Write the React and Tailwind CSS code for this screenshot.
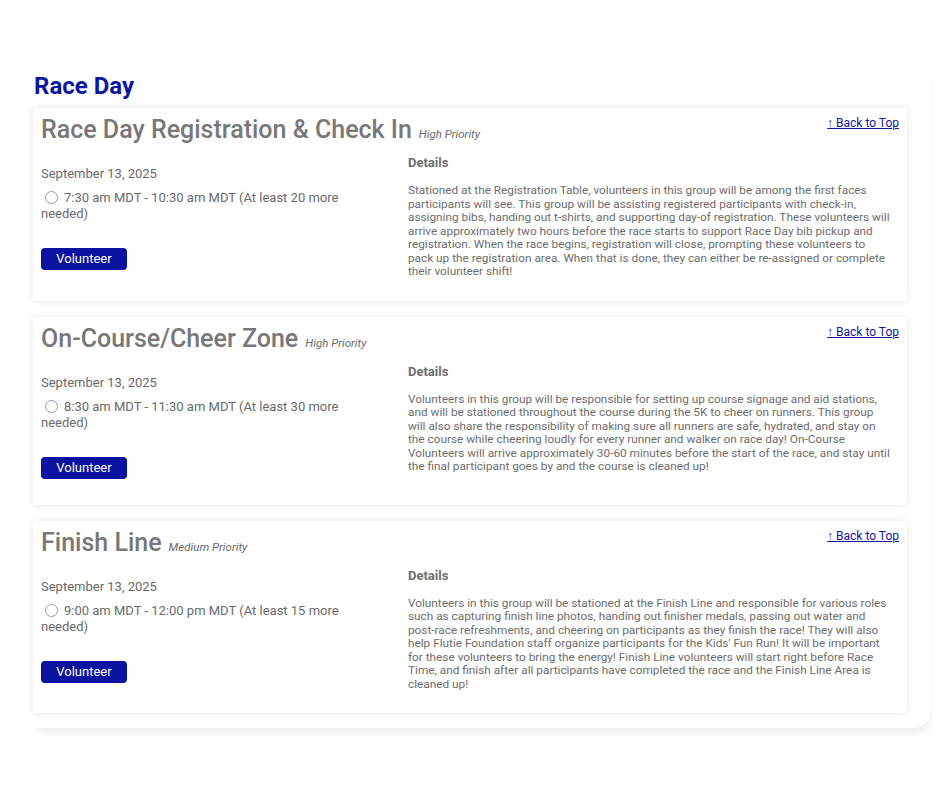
import React from "react";

const shifts = [
    {
        title: "Race Day Registration & Check In",
        priority: "High Priority",
        date: "September 13, 2025",
        time: "7:30 am MDT - 10:30 am MDT (At least 20 more needed)",
        details:
            "Stationed at the Registration Table, volunteers in this group will be among the first faces participants will see. This group will be assisting registered participants with check-in, assigning bibs, handing out t-shirts, and supporting day-of registration. These volunteers will arrive approximately two hours before the race starts to support Race Day bib pickup and registration. When the race begins, registration will close, prompting these volunteers to pack up the registration area. When that is done, they can either be re-assigned or complete their volunteer shift!",
    },
    {
        title: "On-Course/Cheer Zone",
        priority: "High Priority",
        date: "September 13, 2025",
        time: "8:30 am MDT - 11:30 am MDT (At least 30 more needed)",
        details:
            "Volunteers in this group will be responsible for setting up course signage and aid stations, and will be stationed throughout the course during the 5K to cheer on runners. This group will also share the responsibility of making sure all runners are safe, hydrated, and stay on the course while cheering loudly for every runner and walker on race day! On-Course Volunteers will arrive approximately 30-60 minutes before the start of the race, and stay until the final participant goes by and the course is cleaned up!",
    },
    {
        title: "Finish Line",
        priority: "Medium Priority",
        date: "September 13, 2025",
        time: "9:00 am MDT - 12:00 pm MDT (At least 15 more needed)",
        details:
            "Volunteers in this group will be stationed at the Finish Line and responsible for various roles such as capturing finish line photos, handing out finisher medals, passing out water and post-race refreshments, and cheering on participants as they finish the race! They will also help Flutie Foundation staff organize participants for the Kids' Fun Run! It will be important for these volunteers to bring the energy! Finish Line volunteers will start right before Race Time, and finish after all participants have completed the race and the Finish Line Area is cleaned up!",
    },
];

function ShiftCard({ shift }) {
    return (
        <div className="bg-white rounded-[3px] shadow-[0_0_8px_rgba(0,0,0,0.09)] px-2 pt-[7px] pb-[22px]">
            <div className="flex items-start justify-between">
                <h2 className="text-[25px] leading-[30px] font-medium text-[#787878]">
                    {shift.title}
                    <span className="ml-[7px] text-[11.5px] italic font-normal text-[#6a6a6a]">{shift.priority}</span>
                </h2>
                <a href="#" className="mt-[1px] text-[12px] leading-[14px] text-[#1018a0] underline">
                    ↑ Back to Top
                </a>
            </div>
            <div className="flex mt-[5px]">
                <div className="w-[367px] shrink-0 pt-[12px] pb-[4px]">
                    <p className="text-[13px] leading-[16px] text-[#6a6a6a]">{shift.date}</p>
                    <label className="block mt-[8px] pr-[50px] text-[13px] leading-[16px] text-[#6a6a6a]">
                        <span className="inline-block align-[-2px] ml-[4px] mr-[6px] w-[13px] h-[13px] rounded-full border border-[#8aa0b4] bg-white"></span>
                        {shift.time}
                    </label>
                    <button className="mt-[26px] w-[86px] h-[22px] rounded-[4px] bg-[#0a12a0] text-white text-[13px] leading-[22px]">
                        Volunteer
                    </button>
                </div>
                <div className="flex-1 pr-[7px] pt-[1px]">
                    <h3 className="text-[13px] leading-[16px] font-bold text-[#6e6e6e]">Details</h3>
                    <p className="mt-[13px] text-[11.8px] leading-[13.5px] text-[#6d6d6d]">{shift.details}</p>
                </div>
            </div>
        </div>
    );
}

export default function App() {
    return (
        <div className="min-h-[788px] bg-white font-['Roboto',sans-serif] pt-[70px]">
            <div className="ml-[25px] w-[905px] rounded-b-[16px] bg-white shadow-[4px_10px_10px_-6px_rgba(0,0,0,0.09)] pl-[8px] pr-[23px] pb-[15px]">
                <h1 className="text-[24px] leading-[32px] font-bold text-[#0b17a0] ml-[1px]">Race Day</h1>
                <div className="mt-[6px] flex flex-col gap-4">
                    {shifts.map((s) => (
                        <ShiftCard key={s.title} shift={s} />
                    ))}
                </div>
            </div>
        </div>
    );
}
